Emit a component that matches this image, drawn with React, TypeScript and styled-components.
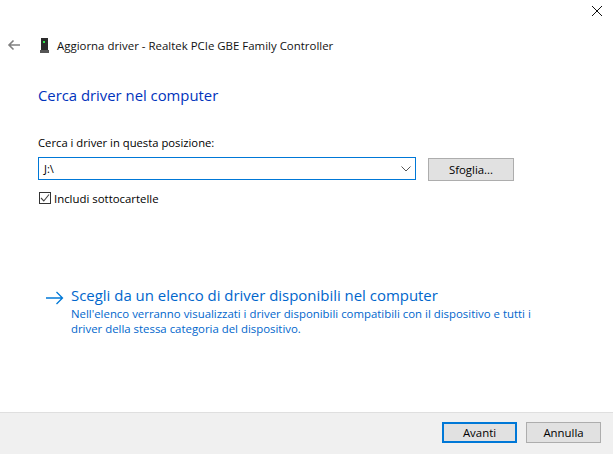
import React from "react";
import styled, { createGlobalStyle } from "styled-components";

const Global = createGlobalStyle`
  html, body { margin: 0; padding: 0; background: #fff; }
  * { box-sizing: border-box; }
`;

const Win = styled.div`
  width: 613px; height: 454px; display: flex; flex-direction: column;
  background: #fff; font-family: "Open Sans", "Noto Sans", sans-serif; font-size: 11.4px; color: #000; overflow: hidden;
`;
const TitleBar = styled.div`
  height: 30px; padding: 4px 10px 0 0; display: flex; justify-content: flex-end; align-items: flex-start;
`;
const Close = styled.div`width: 12px; height: 12px; margin-top: 1px; display: flex;`;
const Header = styled.div`
  height: 30px; display: flex; align-items: center; padding-left: 7px;
`;
const Back = styled.div`width: 14px; height: 12px; display: flex; margin-right: 19px;`;
const DevIcon = styled.div`width: 9px; height: 15px; display: flex; margin-right: 8px;`;
const HeaderTitle = styled.div`font-size: 11.45px; white-space: nowrap; color: #111;`;
const Body = styled.div`flex: 1; padding: 24px 0 0 38px; display: flex; flex-direction: column;`;
const Heading = styled.div`font-size: 14.85px; line-height: 22px; color: #0033bc; white-space: nowrap;`;
const Label = styled.div`margin-top: 29px; height: 16px; line-height: 16px; white-space: nowrap; font-size: 11.25px;`;
const PathRow = styled.div`margin-top: 6px; display: flex; align-items: flex-start;`;
const Combo = styled.div`
  width: 378px; height: 23px; border: 1px solid #0078d7; display: flex; align-items: center; justify-content: space-between;
  padding: 0 4px 0 5px; font-size: 11px;
`;
const Btn = styled.div<{ $primary?: boolean }>`
  width: 75px; height: 21px; background: #e1e1e1; display: flex; align-items: center; justify-content: center; font-size: 11.4px;
  border: ${(p) => (p.$primary ? "2px solid #0078d7" : "1px solid #adadad")}; color: #000;
`;
const Browse = styled(Btn)`width: 86px; height: 23px; margin: 1px 0 0 12px;`;
const CheckRow = styled.div`margin-top: 10px; display: flex; align-items: center; height: 14px; margin-left: 1px;`;
const Box = styled.div`width: 12px; height: 12px; border: 1px solid #333; display: flex; margin-right: 3px; background: #fff;`;
const Link = styled.div`margin: 80px 0 0 8px; display: flex; align-items: flex-start;`;
const Arrow = styled.div`width: 18px; height: 14px; margin: 6px 7px 0 0; display: flex;`;
const LinkText = styled.div`display: flex; flex-direction: column; color: #0066cc;`;
const LinkTitle = styled.div`font-size: 14.95px; line-height: 21px; white-space: nowrap; color: #0066cc;`;
const LinkDesc = styled.div`font-size: 11.4px; line-height: 15px; white-space: nowrap; color: #0066cc;`;
const Footer = styled.div`
  height: 42px; background: #f0f0f0; border-top: 1px solid #dfdfdf; display: flex; justify-content: flex-end; gap: 9px; padding: 9px 12px 0 0;
`;

export default function App() {
  return (
    <Win>
      <Global />
      <TitleBar>
        <Close>
          <svg width="12" height="12" viewBox="0 0 12 12"><path d="M1 1L11 11M11 1L1 11" stroke="#111" strokeWidth="1" /></svg>
        </Close>
      </TitleBar>
      <Header>
        <Back>
          <svg width="14" height="12" viewBox="0 0 14 12"><path d="M13 6H2M6.5 1.5L2 6l4.5 4.5" fill="none" stroke="#808080" strokeWidth="1.6" /></svg>
        </Back>
        <DevIcon>
          <svg width="9" height="15" viewBox="0 0 9 15">
            <path d="M1 0H8V12H1z" fill="#2b2b2b" />
            <path d="M0 12H9V15H0z" fill="#555" />
            <path d="M3 3H5V5H3z" fill="#2ee64a" />
          </svg>
        </DevIcon>
        <HeaderTitle>Aggiorna driver - Realtek PCIe GBE Family Controller</HeaderTitle>
      </Header>
      <Body>
        <Heading>Cerca driver nel computer</Heading>
        <Label>Cerca i driver in questa posizione:</Label>
        <PathRow>
          <Combo>
            J:\
            <svg width="10" height="6" viewBox="0 0 10 6"><path d="M0.5 0.5L5 5l4.5-4.5" fill="none" stroke="#555" strokeWidth="1" /></svg>
          </Combo>
          <Browse>Sfoglia...</Browse>
        </PathRow>
        <CheckRow>
          <Box>
            <svg width="10" height="10" viewBox="0 0 10 10"><path d="M1 5L3.8 8L9 1.5" fill="none" stroke="#444" strokeWidth="1.1" /></svg>
          </Box>
          Includi sottocartelle
        </CheckRow>
        <Link>
          <Arrow>
            <svg width="18" height="14" viewBox="0 0 18 14"><path d="M0 7H16.5M10.5 1L16.5 7L10.5 13" fill="none" stroke="#0078d7" strokeWidth="1.3" /></svg>
          </Arrow>
          <LinkText>
            <LinkTitle>Scegli da un elenco di driver disponibili nel computer</LinkTitle>
            <LinkDesc>Nell'elenco verranno visualizzati i driver disponibili compatibili con il dispositivo e tutti i</LinkDesc>
            <LinkDesc>driver della stessa categoria del dispositivo.</LinkDesc>
          </LinkText>
        </Link>
      </Body>
      <Footer>
        <Btn $primary>Avanti</Btn>
        <Btn>Annulla</Btn>
      </Footer>
    </Win>
  );
}
